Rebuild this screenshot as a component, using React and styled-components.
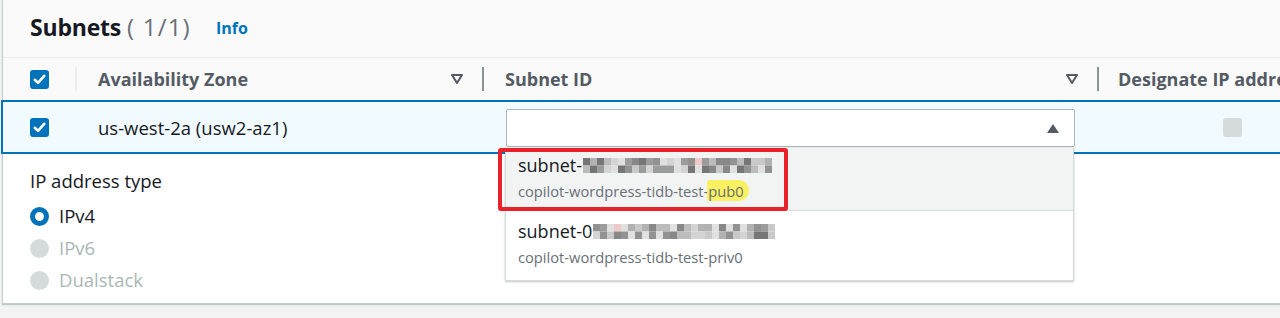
import React from "react";
import styled, { createGlobalStyle } from "styled-components";

const Global = createGlobalStyle`
  html, body { margin: 0; padding: 0; background: #f2f3f3; }
  body { font-family: "Open Sans", "Liberation Sans", sans-serif; color: #16191f; overflow: hidden; }
`;

const Page = styled.div`
  width: 1280px;
  height: 318px;
  overflow: hidden;
  background: #f2f3f3;
`;

const Panel = styled.section`
  margin-left: 2px;
  width: 1300px;
  height: 304px;
  background: #ffffff;
  border-left: 1px solid #c6cccd;
  border-bottom: 1px solid #c6cccd;
  box-sizing: border-box;
  box-shadow: 0 1px 1px rgba(0, 28, 36, 0.2);
`;

const Header = styled.div`
  height: 58px;
  box-sizing: border-box;
  display: flex;
  align-items: center;
  gap: 25px;
  padding: 0 0 4px 27px;
  background: #fafafa;
  border-bottom: 1px solid #eaeded;
`;

const Title = styled.h2`
  margin: 0;
  font-size: 23px;
  font-weight: 700;
  color: #16191f;
  letter-spacing: -0.2px;
`;

const Count = styled.span`
  font-weight: 400;
  font-size: 24px;
  letter-spacing: 1.2px;
  color: #687078;
  margin-left: 6px;
`;

const InfoLink = styled.a`
  font-size: 16px;
  font-weight: 700;
  color: #0073bb;
  text-decoration: none;
  padding-top: 2px;
`;

const Grid = styled.div`
  display: grid;
  grid-template-columns: 72px 407px 615px 1fr;
`;

const HeadCell = styled.div`
  height: 42px;
  display: flex;
  align-items: center;
  background: #fafafa;
  position: relative;
  padding-left: ${(p) => p.$pad || 23}px;
  padding-right: 18px;
  font-size: 18px;
  font-weight: 700;
  color: #545b64;
  white-space: nowrap;
  overflow: hidden;
`;

const HeadDivided = styled(HeadCell)`
  &::after {
    content: "";
    position: absolute;
    left: 0;
    top: 9px;
    bottom: 9px;
    width: 2px;
    background: ${(p) => p.$line || "#879596"};
  }
`;

const HeadLabel = styled.span`
  flex: 1;
`;

const SortIcon = styled.svg`
  width: 14px;
  height: 12px;
  flex: none;
`;

const RowCell = styled.div`
  height: 50px;
  display: flex;
  align-items: center;
  position: relative;
  background: #f1faff;
  border-top: 2px solid #0073bb;
  border-bottom: 2px solid #0073bb;
  padding-left: ${(p) => p.$pad || 23}px;
  font-size: 18.5px;
  color: #16191f;
  white-space: nowrap;
  ${(p) => p.$first && "border-left: 2px solid #0073bb; margin-left: -2px;"}
`;

const CheckBox = styled.span`
  width: 19px;
  height: 19px;
  border-radius: 3px;
  background: ${(p) => (p.$disabled ? "#d5dbdb" : "#0073bb")};
  display: inline-flex;
  align-items: center;
  justify-content: center;
  flex: none;
`;

const SelectBox = styled.div`
  flex: 1;
  margin-right: 22px;
  height: 38px;
  box-sizing: border-box;
  border: 1px solid #aab7b8;
  border-radius: 2px;
  background: #ffffff;
  display: flex;
  align-items: center;
  justify-content: flex-end;
  padding-right: 14px;
  position: relative;
  margin-top: 7px;
  align-self: flex-start;
`;

const Dropdown = styled.div`
  position: absolute;
  left: -2px;
  right: 0;
  top: 37px;
  background: #ffffff;
  border: 1px solid #d5dbdb;
  border-top: 1px solid #eaeded;
  box-shadow: 0 1px 2px rgba(0, 28, 36, 0.25);
  z-index: 5;
`;

const Option = styled.div`
  height: ${(p) => p.$h}px;
  box-sizing: border-box;
  padding: ${(p) => p.$top}px 10px 0 12px;
  background: ${(p) => (p.$active ? "#f2f3f3" : "#ffffff")};
  display: flex;
  flex-direction: column;
  gap: 5px;
  ${(p) => p.$active && "border-bottom: 1px solid #d5dbdb;"}
`;

const OptionTitle = styled.div`
  display: flex;
  align-items: center;
  font-size: 18px;
  color: #16191f;
  line-height: 22px;
  white-space: nowrap;
`;

const OptionSub = styled.div`
  font-size: 14.7px;
  color: #687078;
  line-height: 20px;
  white-space: nowrap;
`;

const Highlight = styled.span`
  background: rgba(250, 240, 70, 0.85);
  border-radius: 2px 10px 10px 2px;
  padding: 1px 5px 0 1px;
  margin-left: -1px;
`;

const RedBox = styled.div`
  position: absolute;
  left: -8px;
  top: 0px;
  width: 290px;
  height: 63px;
  box-sizing: border-box;
  border: 4px solid #e8212b;
  border-radius: 3px;
  pointer-events: none;
  z-index: 6;
`;

const Body = styled.div`
  padding: 15px 0 0 27px;
`;

const FieldLabel = styled.div`
  font-size: 18.5px;
  color: #16191f;
  line-height: 24px;
  margin-bottom: 11px;
`;

const RadioList = styled.div`
  display: flex;
  flex-direction: column;
  gap: 8px;
`;

const RadioRow = styled.label`
  display: flex;
  align-items: center;
  gap: 10px;
  font-size: 18.5px;
  line-height: 24px;
  color: ${(p) => (p.$disabled ? "#aab7b8" : "#16191f")};
`;

const RadioDot = styled.span`
  width: 19px;
  height: 19px;
  border-radius: 50%;
  box-sizing: border-box;
  flex: none;
  background: ${(p) => (p.$checked ? "#ffffff" : "#d5dbdb")};
  border: ${(p) => (p.$checked ? "5.5px solid #0073bb" : "none")};
`;

const Check = () => (
  <svg width="13" height="11" viewBox="0 0 13 11">
    <path d="M1.8 5.8 L5 8.8 L11.2 1.8" fill="none" stroke="#fff" strokeWidth="2.6" strokeLinecap="round" strokeLinejoin="round" />
  </svg>
);

const Sort = () => (
  <SortIcon viewBox="0 0 14 12">
    <path d="M2 2 H12 L7 10 Z" fill="none" stroke="#545b64" strokeWidth="2" strokeLinejoin="round" />
  </SortIcon>
);

const Caret = () => (
  <svg width="14" height="11" viewBox="0 0 14 11">
    <path d="M1 10 L7 1 L13 10 Z" fill="#545b64" />
  </svg>
);

function mosaic(seed, cols) {
  let s = 0;
  for (let i = 0; i < seed.length; i++) s = (s * 31 + seed.charCodeAt(i)) >>> 0;
  const rand = () => {
    s = (s * 1103515245 + 12345) >>> 0;
    return (s >>> 8) / 16777216;
  };
  const shades = ["#e0e0e0", "#c9c9c9", "#b2b2b2", "#9c9c9c", "#888888", "#767676", "#bcbcbc", "#d4d4d4", "#929292"];
  const cells = [];
  for (let r = 0; r < 2; r++) {
    for (let c = 0; c < cols; c++) {
      const v = rand();
      const color = r === 0 && v < 0.06 ? "#eec9c9" : shades[Math.floor(rand() * shades.length)];
      cells.push({ x: c * 7, y: r * 7.5, color });
    }
  }
  return cells;
}

const Pixelated = ({ seed, cols }) => (
  <svg width={cols * 7} height="15" viewBox={`0 0 ${cols * 7} 15`} style={{ marginLeft: 1 }}>
    {mosaic(seed, cols).map((c, i) => (
      <rect key={i} x={c.x} y={c.y} width="7" height="7.5" fill={c.color} />
    ))}
  </svg>
);

export default function App() {
  return (
    <Page>
      <Global />
      <Panel>
        <Header>
          <Title>
            Subnets<Count>( 1/1)</Count>
          </Title>
          <InfoLink href="#">Info</InfoLink>
        </Header>
        <Grid>
          <HeadCell $pad={27}>
            <CheckBox>
              <Check />
            </CheckBox>
          </HeadCell>
          <HeadDivided $line="#eaeded">
            <HeadLabel>Availability Zone</HeadLabel>
            <Sort />
          </HeadDivided>
          <HeadDivided>
            <HeadLabel>Subnet ID</HeadLabel>
            <Sort />
          </HeadDivided>
          <HeadDivided $pad={21}>
            <HeadLabel>Designate IP address</HeadLabel>
          </HeadDivided>

          <RowCell $first $pad={27}>
            <CheckBox>
              <Check />
            </CheckBox>
          </RowCell>
          <RowCell $pad={23}>us-west-2a (usw2-az1)</RowCell>
          <RowCell $pad={24}>
            <SelectBox>
              <Caret />
              <Dropdown>
                <RedBox />
                <Option $active $h={63} $top={6}>
                  <OptionTitle>
                    subnet-
                    <Pixelated seed="pub0-subnet" cols={27} />
                  </OptionTitle>
                  <OptionSub>
                    copilot-wordpress-tidb-test-<Highlight>pub0</Highlight>
                  </OptionSub>
                </Option>
                <Option $h={69} $top={9}>
                  <OptionTitle>
                    subnet-0
                    <Pixelated seed="priv0-subnet" cols={26} />
                  </OptionTitle>
                  <OptionSub>copilot-wordpress-tidb-test-priv0</OptionSub>
                </Option>
              </Dropdown>
            </SelectBox>
          </RowCell>
          <RowCell $pad={126}>
            <CheckBox $disabled />
          </RowCell>
        </Grid>
        <Body>
          <FieldLabel>IP address type</FieldLabel>
          <RadioList>
            <RadioRow>
              <RadioDot $checked />
              IPv4
            </RadioRow>
            <RadioRow $disabled>
              <RadioDot />
              IPv6
            </RadioRow>
            <RadioRow $disabled>
              <RadioDot />
              Dualstack
            </RadioRow>
          </RadioList>
        </Body>
      </Panel>
    </Page>
  );
}
